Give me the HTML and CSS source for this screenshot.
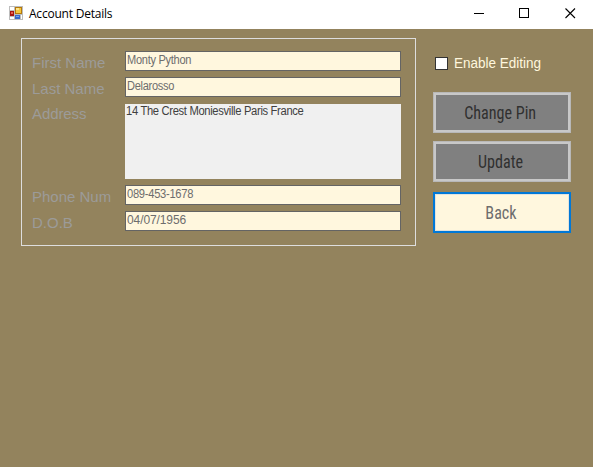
FILE: index.html
```html
<!DOCTYPE html>
<html lang="en">
<head>
<meta charset="utf-8">
<title>Account Details</title>
<link rel="stylesheet" href="styles.css">
</head>
<body>
<header class="titlebar">
  <svg class="app-icon" width="14" height="14" viewBox="0 0 14 14" shape-rendering="crispEdges">
    <path fill="#bdbdbd" d="M0 0h14v14H0z"/>
    <path fill="#fff" d="M1 1h4v3H1zM1 11h4v2H1zM12 9h1v4h-1z"/>
    <path fill="#b5790b" d="M6 1h7v7H6z"/><path fill="#f5c73d" d="M7 2h5v5H7z"/><path fill="#ffe58a" d="M7 2h3v2H7z"/>
    <path fill="#a61510" d="M1 5h4v5H1z"/><path fill="#e8604e" d="M2 6h2v2H2z"/>
    <path fill="#3769c9" d="M6 9h5v4H6z"/><path fill="#75a2ed" d="M7 10h3v1H7z"/>
  </svg>
  <h1 class="title">Account Details</h1>
  <svg class="controls" width="102" height="11" viewBox="0 0 102 11" fill="none" stroke="#000">
    <path d="M0 5.5h10M45.500 .5h9v9h-9z" shape-rendering="crispEdges"/>
    <path d="M91.500 .5l9.500 9.500M101 .5l-9.500 9.500" stroke-width="1.100"/>
  </svg>
</header>
<main class="content">
  <section class="details">
    <div class="row"><span class="label">First Name</span><div class="field"><span class="fit name">Monty Python</span></div></div>
    <div class="row"><span class="label">Last Name</span><div class="field"><span class="fit name">Delarosso</span></div></div>
    <div class="row row-address"><span class="label">Address</span><div class="field area"><span class="fit address">14 The Crest Moniesville Paris France</span></div></div>
    <div class="row"><span class="label">Phone Num</span><div class="field"><span class="fit phone">089-453-1678</span></div></div>
    <div class="row"><span class="label">D.O.B</span><div class="field"><span class="fit date">04/07/1956</span></div></div>
  </section>
  <aside class="actions">
    <label class="toggle"><span class="box"></span><span class="fit toggle-text">Enable Editing</span></label>
    <button class="btn"><span class="btn-text">Change Pin</span></button>
    <button class="btn"><span class="btn-text">Update</span></button>
    <button class="btn back"><span class="btn-text">Back</span></button>
  </aside>
</main>
</body>
</html>
```

FILE: styles.css
```css
* { box-sizing: border-box; }
body { margin: 0; height: 467px; overflow: hidden; background: #93835d; font-family: "Liberation Sans", Arial, sans-serif; }
.titlebar { display: flex; height: 29px; background: #fff; padding-left: 9px; }
.app-icon { margin-top: 6px; }
.title { margin: 0 0 0 6px; font: 400 12px/28px "Open Sans", "Noto Sans", sans-serif; color: #000; letter-spacing: -.22px; white-space: nowrap; }
.controls { margin: 8px 17px 0 auto; }
.content { display: flex; align-items: flex-start; padding: 9px 0 0 21px; }
.details { width: 395px; height: 208px; border: 1px solid #dedede; padding: 12px 14px 0 10px; display: flex; flex-direction: column; gap: 6px; }
.row { display: flex; height: 20px; }
.row-address { height: 75px; margin-top: 1px; }
.label { width: 93px; color: #9c9b99; font-size: 15px; line-height: 24px; white-space: nowrap; }
.row-address .label { line-height: 20px; letter-spacing: -.1px; }
.field { width: 276px; height: 20px; border: 1px solid #646464; background: #fff7de; padding-left: 1px; color: #6d6d6d; font-size: 12px; line-height: 17px; white-space: nowrap; }
.area { height: 75px; border: 0; background: #f0f0f0; color: #404040; line-height: 15px; }
.fit { display: inline-block; transform-origin: 0 50%; }
.name { letter-spacing: -.3px; transform: scaleX(.92); }
.address { letter-spacing: -.35px; transform: scaleX(.933); }
.phone { letter-spacing: -.3px; transform: scaleX(.93); }
.date { letter-spacing: -.1px; }
.actions { width: 138px; margin-left: 17px; }
.toggle { display: flex; align-items: center; height: 17px; margin: 17px 0 20px 2px; color: #fff7de; font-size: 14px; white-space: nowrap; }
.toggle-text { margin-top: -1px; transform: scaleX(.965); }
.box { width: 13px; height: 13px; margin-right: 6px; border: 1px solid #333; background: #fff; }
.btn { display: block; width: 138px; height: 41px; margin: 0 0 8px; padding: 2px 3px 0 0; border: 3px solid #c8c8c8; outline: 1px solid #b8b8b8; outline-offset: -1px; background: #808080; color: #303030; font: 400 17.500px/33px "Roboto Condensed", Roboto, sans-serif; }
.btn-text { display: inline-block; transform: scaleX(.92); white-space: nowrap; }
.back { margin-top: 10px; border: 2px solid #0078d7; outline: 0; background: #fff7de; box-shadow: inset 0 0 0 1px #e3e3dc; color: #6d6d6d; }
```
